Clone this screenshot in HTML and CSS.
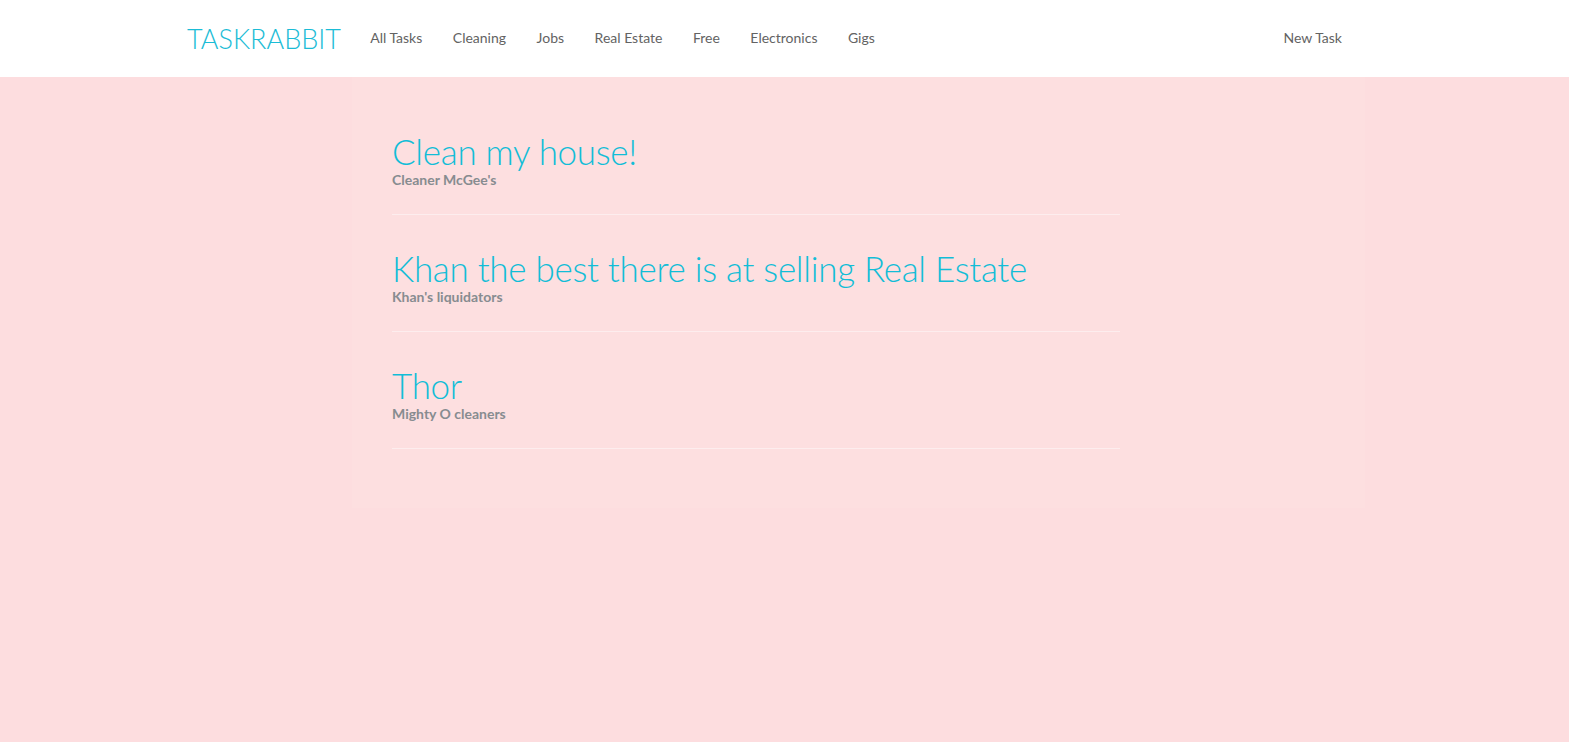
FILE: index.html
```html
<!DOCTYPE html>
<html>
<head>
<meta charset="utf-8">
<link rel="stylesheet" href="styles.css">
</head>
<body>
<header class="navbar">
  <div class="nav-inner">
    <a class="brand">TASKRABBIT</a>
    <ul class="nav-links">
      <li>All Tasks</li>
      <li>Cleaning</li>
      <li>Jobs</li>
      <li>Real Estate</li>
      <li>Free</li>
      <li>Electronics</li>
      <li>Gigs</li>
    </ul>
    <ul class="nav-right">
      <li>New Task</li>
    </ul>
  </div>
</header>
<main class="page">
  <section class="panel">
    <ul class="tasks">
      <li class="task">
        <h1 class="task-title">Clean my house!</h1>
        <div class="task-owner">Cleaner McGee's</div>
      </li>
      <li class="task">
        <h1 class="task-title">Khan the best there is at selling Real Estate</h1>
        <div class="task-owner">Khan's liquidators</div>
      </li>
      <li class="task">
        <h1 class="task-title">Thor</h1>
        <div class="task-owner">Mighty O cleaners</div>
      </li>
    </ul>
  </section>
</main>
</body>
</html>
```
FILE: styles.css
```css
html, body {
  margin: 0;
  padding: 0;
  height: 100%;
}
body {
  font-family: Lato, "Open Sans", "Liberation Sans", sans-serif;
  background: #fddddf;
  display: flex;
  flex-direction: column;
}
ul {
  list-style: none;
  margin: 0;
  padding: 0;
}
.navbar {
  background: #ffffff;
  height: 77px;
  flex: none;
}
.nav-inner {
  display: flex;
  align-items: center;
  height: 100%;
  padding: 0 227px 0 187px;
}
.brand {
  font-weight: 300;
  font-size: 27px;
  color: #1bbcd6;
  margin-right: 14px;
}
.nav-links {
  display: flex;
  flex: 1;
}
.nav-links li, .nav-right li {
  font-size: 14px;
  color: #636363;
  padding: 0 15.25px;
  line-height: 20px;
  margin-top: -1px;
}
.nav-right li {
  padding-right: 0;
}
.page {
  flex: 1;
  padding-left: 352px;
}
.panel {
  width: 973px;
  background: #fddfe0;
  padding: 21px 0 59px 40px;
}
.tasks {
  width: 728px;
}
.task {
  padding: 34px 0 24px;
  border-bottom: 1px solid #fdedee;
}
.task-title {
  margin: 0;
  font-weight: 300;
  font-size: 35px;
  letter-spacing: -0.3px;
  line-height: 39px;
  color: #12bdd7;
}
.task-owner {
  font-size: 14px;
  font-weight: 700;
  line-height: 20px;
  color: #878c90;
  margin-top: -1px;
}
```
